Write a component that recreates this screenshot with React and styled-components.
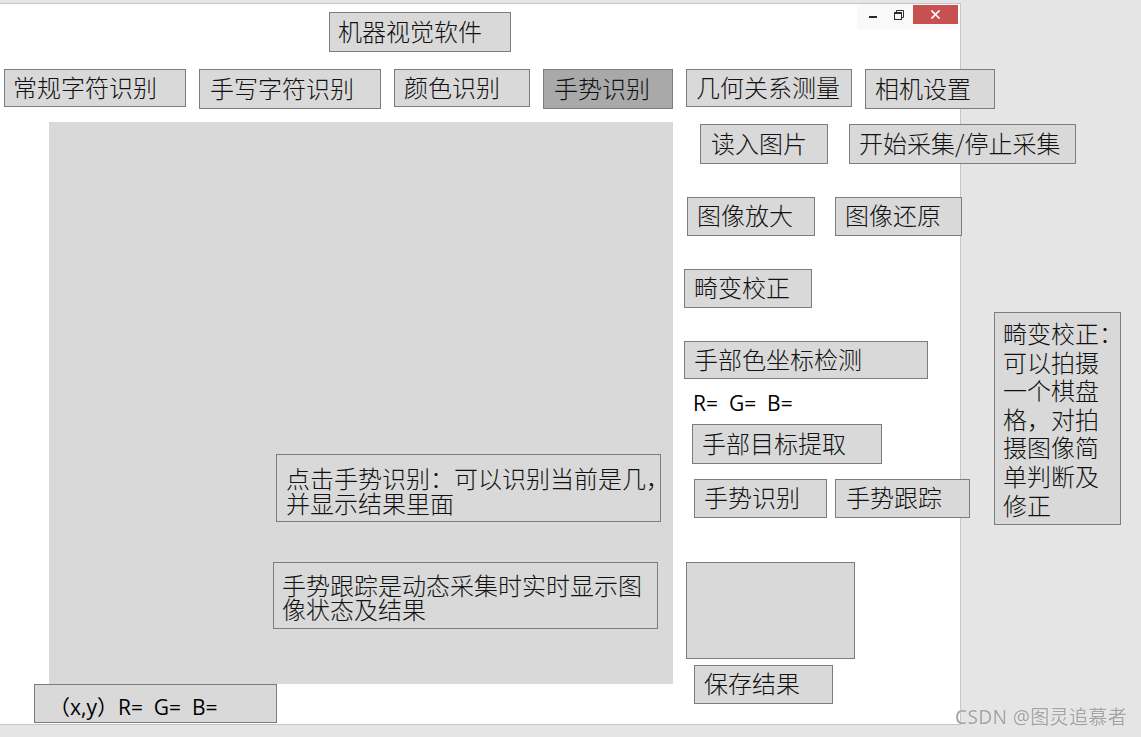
import React from "react";
import styled, { createGlobalStyle } from "styled-components";

const GlobalStyle = createGlobalStyle`
  html, body {
    margin: 0;
    padding: 0;
  }
  body {
    width: 1141px;
    height: 737px;
    overflow: hidden;
    background: #e5e5e5;
    font-family: "Noto Sans CJK SC", "Noto Sans", sans-serif;
    color: #111;
  }
`;

const CJK = `"Noto Sans CJK SC", "Noto Sans CJK JP", sans-serif`;
const LATIN = `"Open Sans", "Noto Sans", "Noto Sans CJK SC", sans-serif`;

/* ---------- desktop & window chrome ---------- */

const Desktop = styled.div`
  position: relative;
  width: 1141px;
  height: 737px;
  box-sizing: border-box;
  padding-top: 3px;
  background: #e5e5e5;
`;

const Window = styled.div`
  position: relative;
  width: 961px;
  height: 722px;
  box-sizing: border-box;
  background: #ffffff;
  border-top: 1px solid #c6c6c6;
  border-right: 1px solid #c6c6c6;
  border-bottom: 1px solid #c6c6c6;
`;

/* caption buttons lie over the top-right corner of the client area */
const CaptionBar = styled.div`
  position: absolute;
  top: 0;
  right: 2px;
  height: 25px;
  display: flex;
  align-items: flex-start;
  background: #f9f9f9;
  z-index: 2;
`;

const MinimizeButton = styled.div`
  width: 28px;
  height: 25px;
  box-sizing: border-box;
  display: flex;
  justify-content: center;
  padding: 12px 0 0 4px;
`;

const RestoreButton = styled.div`
  width: 28px;
  height: 25px;
  box-sizing: border-box;
  display: flex;
  justify-content: center;
  padding-top: 6px;
`;

const MinimizeGlyph = styled.div`
  width: 8px;
  height: 2px;
  background: #2b2b2b;
`;

const CloseButton = styled.div`
  width: 45px;
  height: 19px;
  margin-top: 1px;
  background: #c75050;
  display: flex;
  align-items: center;
  justify-content: center;
`;

/* ---------- form layout ---------- */

const Form = styled.div`
  display: flex;
  flex-direction: column;
`;

const Header = styled.div`
  display: flex;
  padding: 8px 0 0 329px;
`;

const TabBar = styled.div`
  display: flex;
  align-items: flex-start;
  gap: 13px;
  margin-top: 17px;
  padding-left: 4px;
`;

const Body = styled.div`
  display: flex;
  align-items: flex-start;
  margin-top: 13px;
`;

const ImageColumn = styled.div`
  display: flex;
  flex-direction: column;
  align-items: flex-start;
  padding-left: 34px;
`;

const ControlColumn = styled.div`
  display: flex;
  flex-direction: column;
  align-items: flex-start;
  gap: 33px;
  padding: 2px 0 0 11px;
`;

const AcquireRow = styled.div`
  display: flex;
  gap: 21px;
  padding-left: 16px;
`;

const ZoomRow = styled.div`
  display: flex;
  gap: 20px;
  padding-left: 3px;
`;

const MeasureGroup = styled.div`
  display: flex;
  flex-direction: column;
  align-items: flex-start;
  gap: 7px;
`;

const InsetStack = styled.div`
  display: flex;
  flex-direction: column;
  align-items: flex-start;
  gap: 7px;
  padding-left: 8px;
`;

const GestureRow = styled.div`
  display: flex;
  align-items: flex-start;
  gap: 8px;
  margin-top: 8px;
  padding-left: 2px;
`;

const ResultGroup = styled.div`
  display: flex;
  flex-direction: column;
  align-items: flex-start;
  gap: 6px;
  margin-top: 11px;
  padding-left: 2px;
`;

const SaveSlot = styled.div`
  padding-left: 8px;
`;

/* ---------- controls ---------- */

const FormButton = styled.div`
  width: ${(p) => p.$w}px;
  height: ${(p) => p.$h}px;
  box-sizing: border-box;
  flex: none;
  display: flex;
  align-items: center;
  padding: 0 0 3px ${(p) => (p.$pad != null ? p.$pad : 9)}px;
  background: ${(p) => (p.$active ? "#a9a9a9" : "#d9d9d9")};
  border: 1px solid #7c7c7c;
  font-family: ${CJK};
  font-weight: 300;
  font-size: 24px;
  line-height: 28px;
  white-space: nowrap;
  color: #111;
`;

const TitleLabel = styled(FormButton)``;

const PictureFrame = styled.div`
  position: relative;
  width: 624px;
  height: 562px;
  margin-left: 15px;
  background: #d9d9d9;
`;

const ResultBox = styled.div`
  width: 169px;
  height: 97px;
  box-sizing: border-box;
  background: #d9d9d9;
  border: 1px solid #7c7c7c;
`;

/* annotation boxes drawn over the picture area / desktop */
const Note = styled.div`
  position: absolute;
  left: ${(p) => p.$x}px;
  top: ${(p) => p.$y}px;
  width: ${(p) => p.$w}px;
  height: ${(p) => p.$h}px;
  box-sizing: border-box;
  padding: ${(p) => p.$padTop}px 0 0 ${(p) => p.$pad}px;
  background: #d9d9d9;
  border: 1px solid #7c7c7c;
  font-family: ${CJK};
  font-weight: 300;
  font-size: 24px;
  line-height: ${(p) => p.$lh}px;
  white-space: pre;
  color: #111;
  z-index: 1;
`;

const ValueLabel = styled.div`
  padding: 3px 0 0 1px;
  font-family: ${LATIN};
  font-size: 21px;
  line-height: 28px;
  white-space: pre;
  color: #000;
`;

const CoordLabel = styled.div`
  width: 243px;
  height: 39px;
  box-sizing: border-box;
  padding: 8px 0 0 14px;
  background: #d9d9d9;
  border: 1px solid #7c7c7c;
  font-family: ${LATIN};
  font-size: 21px;
  line-height: 28px;
  white-space: pre;
  color: #000;
`;

const Watermark = styled.div`
  position: absolute;
  left: 955px;
  top: 704px;
  font-family: "Noto Sans", "Noto Sans CJK SC", sans-serif;
  font-size: 19px;
  line-height: 26px;
  letter-spacing: 0.4px;
  color: #a3a3a3;
  text-shadow: 0 0 1px #ffffff, 0 0 1px #ffffff;
  white-space: nowrap;
  z-index: 3;
`;

/* ---------- data ---------- */

const tabs = [
  { text: "常规字符识别", w: 182, h: 38, pad: 8 },
  { text: "手写字符识别", w: 182, h: 40, pad: 10 },
  { text: "颜色识别", w: 136, h: 38, pad: 9 },
  { text: "手势识别", w: 130, h: 40, pad: 10, active: true },
  { text: "几何关系测量", w: 166, h: 38, pad: 9 },
  { text: "相机设置", w: 130, h: 40, pad: 9 },
];

const pictureNotes = [
  {
    text: "点击手势识别：可以识别当前是几，\n并显示结果里面",
    x: 227, y: 332, w: 385, h: 68, pad: 9, padTop: 10, lh: 25,
  },
  {
    text: "手势跟踪是动态采集时实时显示图\n像状态及结果",
    x: 224, y: 440, w: 385, h: 67, pad: 8, padTop: 10, lh: 24,
  },
];

const sideNote = {
  text: "畸变校正：\n可以拍摄\n一个棋盘\n格，对拍\n摄图像简\n单判断及\n修正",
  x: 994, y: 312, w: 127, h: 213, pad: 8, padTop: 6, lh: 28.6,
};

function RestoreIcon() {
  return (
    <svg width="10" height="10" viewBox="0 0 10 10" fill="none">
      <path d="M2.5 2.5V0.5H9.5V7.5H7.5" stroke="#2b2b2b" strokeWidth="1" />
      <rect x="0.5" y="2.5" width="7" height="7" stroke="#2b2b2b" strokeWidth="1" />
      <line x1="0.5" y1="3.5" x2="7.5" y2="3.5" stroke="#2b2b2b" strokeWidth="1" />
    </svg>
  );
}

function CloseIcon() {
  return (
    <svg width="9" height="9" viewBox="0 0 9 9">
      <path d="M1 1L8 8M8 1L1 8" stroke="#ffffff" strokeWidth="1.6" strokeLinecap="square" />
    </svg>
  );
}

function NoteBox({ n }) {
  return (
    <Note $x={n.x} $y={n.y} $w={n.w} $h={n.h} $pad={n.pad} $padTop={n.padTop} $lh={n.lh}>
      {n.text}
    </Note>
  );
}

export default function App() {
  return (
    <>
      <GlobalStyle />
      <Desktop>
        <Window>
          <CaptionBar>
            <MinimizeButton>
              <MinimizeGlyph />
            </MinimizeButton>
            <RestoreButton>
              <RestoreIcon />
            </RestoreButton>
            <CloseButton>
              <CloseIcon />
            </CloseButton>
          </CaptionBar>

          <Form>
            <Header>
              <TitleLabel $w={182} $h={40} $pad={8}>
                机器视觉软件
              </TitleLabel>
            </Header>

            <TabBar>
              {tabs.map((t) => (
                <FormButton key={t.text + t.w} $w={t.w} $h={t.h} $pad={t.pad} $active={t.active}>
                  {t.text}
                </FormButton>
              ))}
            </TabBar>

            <Body>
              <ImageColumn>
                <PictureFrame>
                  {pictureNotes.map((n) => (
                    <NoteBox key={n.text} n={n} />
                  ))}
                </PictureFrame>
                <CoordLabel>{"（x,y）R=  G=  B="}</CoordLabel>
              </ImageColumn>

              <ControlColumn>
                <AcquireRow>
                  <FormButton $w={128} $h={40} $pad={10}>读入图片</FormButton>
                  <FormButton $w={227} $h={40}>开始采集/停止采集</FormButton>
                </AcquireRow>

                <ZoomRow>
                  <FormButton $w={128} $h={39}>图像放大</FormButton>
                  <FormButton $w={127} $h={39}>图像还原</FormButton>
                </ZoomRow>

                <FormButton $w={128} $h={39}>畸变校正</FormButton>

                <MeasureGroup>
                  <FormButton $w={244} $h={38}>手部色坐标检测</FormButton>
                  <InsetStack>
                    <ValueLabel>{"R=  G=  B="}</ValueLabel>
                    <FormButton $w={190} $h={40}>手部目标提取</FormButton>
                    <GestureRow>
                      <FormButton $w={133} $h={39}>手势识别</FormButton>
                      <FormButton $w={135} $h={39} $pad={10}>手势跟踪</FormButton>
                    </GestureRow>
                  </InsetStack>
                </MeasureGroup>

                <ResultGroup>
                  <ResultBox />
                  <SaveSlot>
                    <FormButton $w={139} $h={39}>保存结果</FormButton>
                  </SaveSlot>
                </ResultGroup>
              </ControlColumn>
            </Body>
          </Form>
        </Window>

        <NoteBox n={sideNote} />

        <Watermark>CSDN @图灵追慕者</Watermark>
      </Desktop>
    </>
  );
}
